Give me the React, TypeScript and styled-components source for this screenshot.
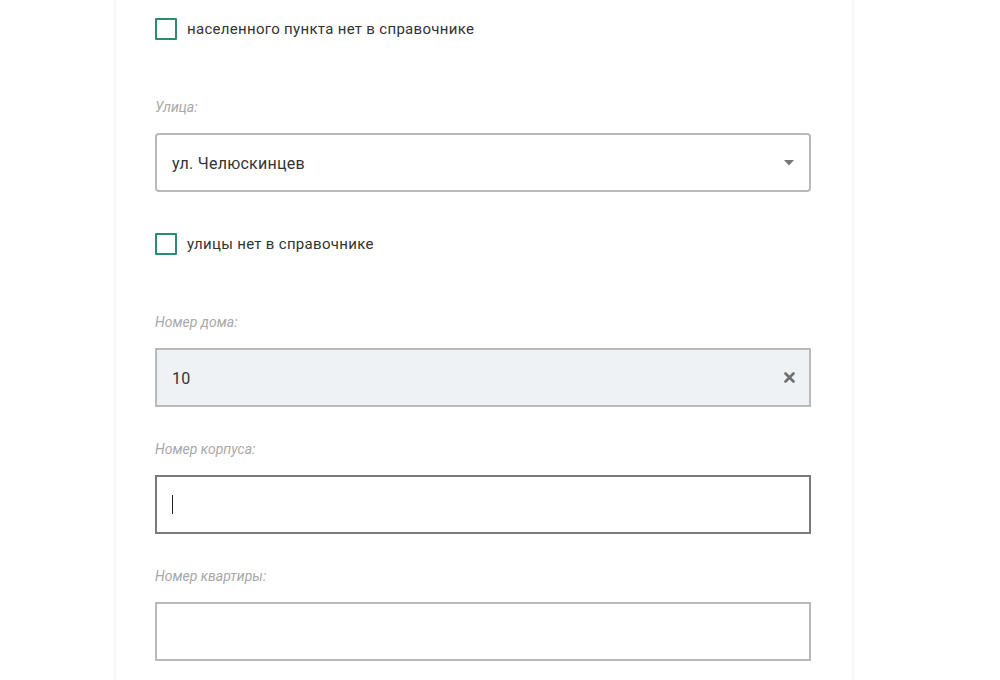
import React from "react";
import styled, { createGlobalStyle } from "styled-components";

const Global = createGlobalStyle`
  html, body { margin: 0; padding: 0; background: #ffffff; overflow: hidden; }
  body { font-family: Roboto, "Noto Sans", Arial, sans-serif; color: #333; }
  * { box-sizing: border-box; }
`;

const Page = styled.div`
  width: 1000px;
  height: 680px;
  background: #fff;
  overflow: hidden;
`;

const Card = styled.div`
  margin-left: 116px;
  width: 736px;
  min-height: 700px;
  background: #fff;
  box-shadow: -2px 0 3px rgba(0, 0, 0, 0.045), 2px 0 3px rgba(0, 0, 0, 0.045);
  padding: 18px 41px 0 39px;
  display: flex;
  flex-direction: column;
`;

const CheckRow = styled.label<{ $mt?: number }>`
  display: flex;
  align-items: center;
  gap: 10px;
  height: 22px;
  margin-top: ${(p) => p.$mt ?? 0}px;
  font-size: 15px;
  letter-spacing: 0.3px;
  color: #333;
  cursor: pointer;
`;

const Box = styled.span`
  width: 22px;
  height: 22px;
  border: 2px solid #2e8a73;
  border-radius: 1px;
  flex: none;
  background: #fff;
`;

const Group = styled.div<{ $mt: number }>`
  margin-top: ${(p) => p.$mt}px;
  display: flex;
  flex-direction: column;
  gap: 18px;
`;

const Label = styled.div`
  font-size: 14px;
  line-height: 16px;
  font-style: italic;
  color: #a8a8a8;
`;

const Control = styled.div<{ $variant?: "select" | "filled" | "focus" | "plain" }>`
  height: 59px;
  display: flex;
  align-items: center;
  padding: 0 15px;
  border: 2px solid
    ${(p) => (p.$variant === "focus" ? "#7a7a7a" : "#b9b9b9")};
  border-radius: ${(p) => (p.$variant === "select" ? "4px" : "0")};
  background: ${(p) => (p.$variant === "filled" ? "#eef2f5" : "#fff")};
  font-size: 16px;
  letter-spacing: 0.25px;
  color: #333;
`;

const Value = styled.span`
  flex: 1;
  padding-top: 1px;
`;

const Caret = styled.span`
  width: 1px;
  height: 19px;
  background: #222;
`;

const IconSlot = styled.span`
  display: flex;
  align-items: center;
  justify-content: center;
  width: 14px;
  margin-right: -2px;
`;

export default function App() {
  return (
    <Page>
      <Global />
      <Card>
        <CheckRow>
          <Box />
          <span>населенного пункта нет в справочнике</span>
        </CheckRow>

        <Group $mt={59}>
          <Label>Улица:</Label>
          <Control $variant="select">
            <Value>ул. Челюскинцев</Value>
            <IconSlot>
              <svg width="10" height="6" viewBox="0 0 10 6">
                <path d="M0 0 L10 0 L5 5.5 Z" fill="#777" />
              </svg>
            </IconSlot>
          </Control>
        </Group>

        <CheckRow $mt={41}>
          <Box />
          <span>улицы нет в справочнике</span>
        </CheckRow>

        <Group $mt={59}>
          <Label>Номер дома:</Label>
          <Control $variant="filled">
            <Value>10</Value>
            <IconSlot>
              <svg width="11" height="11" viewBox="0 0 11 11">
                <path
                  d="M1.5 1.5 L9.5 9.5 M9.5 1.5 L1.5 9.5"
                  stroke="#6f6f6f"
                  strokeWidth="2.6"
                  strokeLinecap="round"
                />
              </svg>
            </IconSlot>
          </Control>
        </Group>

        <Group $mt={34}>
          <Label>Номер корпуса:</Label>
          <Control $variant="focus">
            <Caret />
          </Control>
        </Group>

        <Group $mt={34}>
          <Label>Номер квартиры:</Label>
          <Control $variant="plain" />
        </Group>
      </Card>
    </Page>
  );
}
